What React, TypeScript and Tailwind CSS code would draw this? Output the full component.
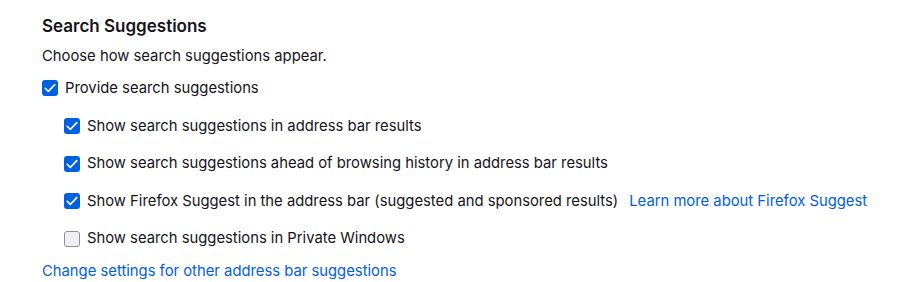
import React from 'react';

type Item = { label: string; checked: boolean; link?: string };

const items: Item[] = [
  { label: 'Show search suggestions in address bar results', checked: true },
  { label: 'Show search suggestions ahead of browsing history in address bar results', checked: true },
  {
    label: 'Show Firefox Suggest in the address bar (suggested and sponsored results)',
    checked: true,
    link: 'Learn more about Firefox Suggest',
  },
  { label: 'Show search suggestions in Private Windows', checked: false },
];

function Checkbox({ checked }: { checked: boolean }) {
  if (!checked) {
    return <span className="block h-4 w-4 shrink-0 rounded-[3px] border border-[#8f8f9d] bg-[#f0f0f4]" />;
  }
  return (
    <span className="flex h-4 w-4 shrink-0 items-center justify-center rounded-[3px] bg-[#0061e0]">
      <svg viewBox="0 0 16 16" className="h-4 w-4" fill="none">
        <path d="M3.2 8.3l3.1 3.1 6.5-6.8" stroke="white" strokeWidth="1.6" strokeLinecap="round" strokeLinejoin="round" />
      </svg>
    </span>
  );
}

export default function App() {
  return (
    <div className="h-[282px] w-[903px] bg-white pl-[42px] pt-[14px] font-['Inter','Liberation_Sans',sans-serif] text-[14.8px] text-[#15141a]">
      <h2 className="text-[17px] font-semibold leading-[24px]">Search Suggestions</h2>
      <p className="mt-[8px] leading-[20px]">Choose how search suggestions appear.</p>
      <label className="mt-[12px] flex h-[20px] items-center gap-[7px]">
        <Checkbox checked />
        <span>Provide search suggestions</span>
      </label>
      <div className="ml-[22px] flex flex-col gap-[17.5px] pt-[18px]">
        {items.map((it) => (
          <div key={it.label} className="flex h-[20px] items-center gap-[7px]">
            <Checkbox checked={it.checked} />
            <span>{it.label}</span>
            {it.link && <a className="ml-[4px] text-[#0061e0]">{it.link}</a>}
          </div>
        ))}
      </div>
      <a className="mt-[12px] block leading-[20px] text-[#0061e0]">Change settings for other address bar suggestions</a>
    </div>
  );
}
